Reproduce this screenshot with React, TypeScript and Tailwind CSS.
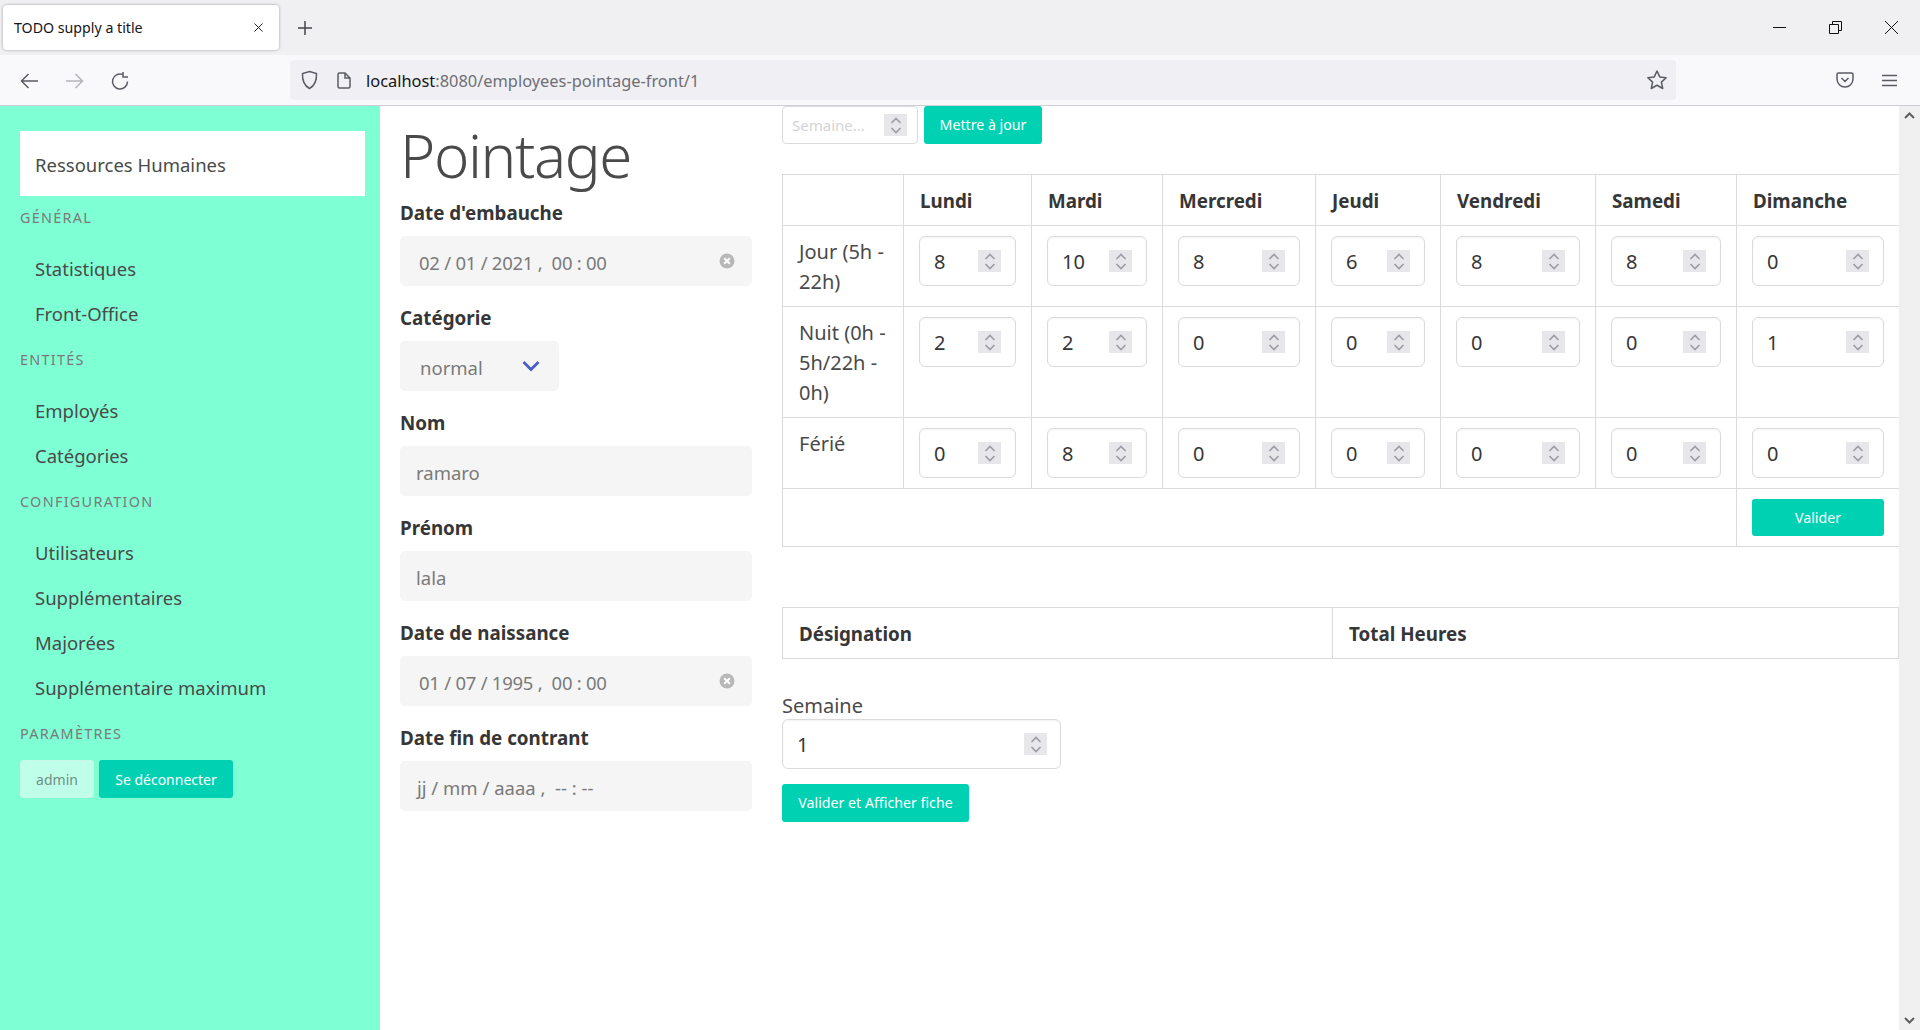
import { X } from "lucide-react"

const menu = [
  { title: "Général", items: ["Statistiques", "Front-Office"] },
  { title: "Entités", items: ["Employés", "Catégories"] },
  { title: "Configuration", items: ["Utilisateurs", "Supplémentaires", "Majorées", "Supplémentaire maximum"] },
]

const days = ["Lundi", "Mardi", "Mercredi", "Jeudi", "Vendredi", "Samedi", "Dimanche"]

const rows = [
  { label: "Jour (5h - 22h)", values: [8, 10, 8, 6, 8, 8, 0] },
  { label: "Nuit (0h - 5h/22h - 0h)", values: [2, 2, 0, 0, 0, 0, 1] },
  { label: "Férié", values: [0, 8, 0, 0, 0, 0, 0] },
]

const colWidths = ["w-[121px]", "w-[128px]", "w-[131px]", "w-[153px]", "w-[125px]", "w-[155px]", "w-[141px]", "w-[163px]"]

function Spinner() {
  return (
    <span className="flex h-[22px] w-[23px] shrink-0 items-center justify-center bg-[#e6e6eb]">
      <svg width="12" height="17" viewBox="0 0 12 17" fill="none" stroke="#9c9ca6" strokeWidth="1.6">
        <path d="M1.500 6 6 1.500 10.500 6" />
        <path d="M1.500 11 6 15.500 10.500 11" />
      </svg>
    </span>
  )
}

function NumberField({ value }: { value: number }) {
  return (
    <div className="flex h-[50px] items-center rounded-[6px] border border-[#dbdbdb] pl-[14px] pr-[14px] shadow-[inset_0_1px_2px_rgba(10,10,10,0.05)]">
      <input readOnly value={value} className="w-full min-w-0 bg-transparent pt-px text-[20px] text-[#363636] outline-none" />
      <Spinner />
    </div>
  )
}

function ClearIcon() {
  return (
    <svg width="16" height="16" viewBox="0 0 16 16" className="shrink-0">
      <circle cx="8" cy="8" r="7.5" fill="#b8b8b8" />
      <path d="M5.200 5.200 10.800 10.800M10.800 5.200 5.200 10.800" stroke="#fff" strokeWidth="2" />
    </svg>
  )
}

function Field({ label, value, clear, inset = "pl-4" }: { label: string; value: string; clear?: boolean; inset?: string }) {
  return (
    <div className="mb-[17px]">
      <div className="mb-2 text-[18.800px] font-bold leading-[30px] text-[#363636]">{label}</div>
      <div className={`flex h-[50px] items-center rounded-[5px] bg-[#f5f5f5] pr-[17px] text-[18.500px] text-[#7a7a7a] ${inset}`}>
        <span className="flex-1 whitespace-pre pt-[3px]">{value}</span>
        {clear && <ClearIcon />}
      </div>
    </div>
  )
}

function BrowserChrome() {
  return (
    <div className="h-[106px] border-b border-[#cfcfd3] bg-[#f9f9fb]">
      <div className="flex h-[55px] items-center bg-[#f0f0f2] pl-[3px]">
        <div className="flex h-[45px] w-[276px] items-center justify-between rounded-[4px] bg-white pl-[11px] pr-[13px] text-[14.200px] text-[#15141a] shadow-[0_0_3px_rgba(0,0,0,0.35)]">
          <span>TODO supply a title</span>
          <X size={15} strokeWidth={1.5} />
        </div>
        <svg width="16" height="16" viewBox="0 0 16 16" className="ml-[18px]" stroke="#44434a" strokeWidth="1.5">
          <path d="M8 1v14M1 8h14" />
        </svg>
        <div className="ml-auto flex items-center gap-[43px] pr-[22px]">
          <svg width="13" height="13" viewBox="0 0 13 13" stroke="#111" strokeWidth="1"><path d="M0 6.500h13" /></svg>
          <svg width="13" height="13" viewBox="0 0 13 13" fill="none" stroke="#111" strokeWidth="1"><path d="M.5 3.500h9v9h-9zM3.500 3.500v-3h9v9h-3" /></svg>
          <svg width="13" height="13" viewBox="0 0 13 13" stroke="#111" strokeWidth="1"><path d="M0 0 13 13M13 0 0 13" /></svg>
        </div>
      </div>
      <div className="flex h-[50px] items-center">
        <div className="flex w-[290px] items-center gap-[26px] pl-[20px] pt-[2px]">
          <svg width="19" height="18" viewBox="0 0 19 18" fill="none" stroke="#5b5b66" strokeWidth="1.5"><path d="M18 9H1.500M8.500 2l-7 7 7 7" /></svg>
          <svg width="19" height="18" viewBox="0 0 19 18" fill="none" stroke="#b4b4ba" strokeWidth="1.5"><path d="M1 9h16.500M10.500 2l7 7-7 7" /></svg>
          <svg width="20" height="20" viewBox="0 0 20 20" fill="none" stroke="#5b5b66" strokeWidth="1.5"><path d="M17.500 10.500A7.500 7.500 0 1 1 12.500 3.400M13 1v5h5" /></svg>
        </div>
        <div className="flex h-10 w-[1386px] items-center rounded-[4px] bg-[#f0f0f4] pl-[11px] pr-[8px]">
          <svg width="17" height="20" viewBox="0 0 17 20" fill="none" stroke="#5b5b66" strokeWidth="1.5"><path d="M8.500 1.500 15.500 3.500C15.800 10 14 15.500 8.500 18.500 3 15.500 1.200 10 1.500 3.500Z" /></svg>
          <svg width="14" height="17" viewBox="0 0 14 17" fill="none" stroke="#5b5b66" strokeWidth="1.5" className="ml-[19px]"><path d="M1 2.500A1.500 1.500 0 0 1 2.500 1H8l5 5v8.500A1.500 1.500 0 0 1 11.500 16h-9A1.500 1.500 0 0 1 1 14.500ZM8 1v5h5" /></svg>
          <span className="ml-[15px] pt-[2px] text-[16.400px] text-[#15141a]">localhost<span className="text-[#6f6e75]">:8080/employees-pointage-front/1</span></span>
          <svg width="22" height="22" viewBox="0 0 20 20" fill="none" stroke="#5b5b66" strokeWidth="1.4" className="ml-auto"><path d="m10 1.800 2.500 5.400 5.800.7-4.300 4 1.200 5.800-5.200-2.900-5.200 2.900 1.200-5.800-4.300-4 5.800-.7Z" strokeLinejoin="round" /></svg>
        </div>
        <svg width="18" height="16" viewBox="0 0 18 16" fill="none" stroke="#5b5b66" strokeWidth="1.5" className="ml-[160px]"><path d="M2.500 1h13A1.500 1.500 0 0 1 17 2.500V7A8 8 0 0 1 1 7V2.500A1.500 1.500 0 0 1 2.500 1ZM5.500 6 9 9.500 12.500 6" /></svg>
        <svg width="15" height="13" viewBox="0 0 15 13" stroke="#5b5b66" strokeWidth="1.500" className="ml-[28px]"><path d="M0 1.500h15M0 6.500h15M0 11.500h15" /></svg>
      </div>
    </div>
  )
}

function Sidebar() {
  return (
    <aside className="w-[380px] shrink-0 bg-[#7fffd4] pl-5 pr-[15px] pt-[25px]">
      <div className="flex h-[65px] items-center bg-white pl-[15px] pt-[2px] text-[18.500px] text-[#4a4a4a]">Ressources Humaines</div>
      {menu.map((group) => (
        <div key={group.title}>
          <p className="mt-[12px] text-[14.400px] uppercase leading-[20px] tracking-[1.300px] text-[#7a7a7a]">{group.title}</p>
          <ul className="mb-[14px] mt-[18px]">
            {group.items.map((item) => (
              <li key={item} className="flex h-[45px] items-center pl-[15px] text-[18.500px] text-[#4a4a4a]">{item}</li>
            ))}
          </ul>
        </div>
      ))}
      <p className="mt-[14px] text-[14.400px] uppercase leading-[20px] tracking-[1.300px] text-[#7a7a7a]">Paramètres</p>
      <div className="mt-[16px] flex gap-[5px]">
        <button className="h-[38px] w-[74px] rounded-[3px] border border-[#c9f7e7] bg-[#bfffe9] text-[14px] text-[#6f8f85]">admin</button>
        <button className="h-[38px] w-[134px] rounded-[3px] bg-[#00d1b2] text-[14px] text-white">Se déconnecter</button>
      </div>
    </aside>
  )
}

export default function App() {
  return (
    <div className="flex h-[1030px] w-[1920px] flex-col overflow-hidden bg-white font-['Noto_Sans',sans-serif] text-[#4a4a4a]">
      <BrowserChrome />
      <div className="flex flex-1">
        <Sidebar />

        <section className="ml-5 w-[352px] shrink-0">
          <h1 className="mb-[9px] mt-[15px] text-[60px] font-light leading-[68px] tracking-[-1.400px] text-[#4a4a4a]">Pointage</h1>
          <Field label="Date d'embauche" value="02 / 01 / 2021 ,  00 : 00" clear inset="pl-[19px] tracking-[-0.250px]" />
          <div className="mb-[17px]">
            <div className="mb-2 text-[18.800px] font-bold leading-[30px] text-[#363636]">Catégorie</div>
            <div className="flex h-[50px] w-[159px] items-center justify-between rounded-[5px] bg-[#f5f5f5] pl-5 pr-[19px] text-[18.500px] text-[#7a7a7a]">
              <span className="pt-[3px]">normal</span>
              <svg width="18" height="12" viewBox="0 0 18 12" fill="none" stroke="#485fc7" strokeWidth="2.800"><path d="M1.500 2 9 9.500 16.500 2" /></svg>
            </div>
          </div>
          <Field label="Nom" value="ramaro" />
          <Field label="Prénom" value="lala" />
          <Field label="Date de naissance" value="01 / 07 / 1995 ,  00 : 00" clear inset="pl-[19px] tracking-[-0.250px]" />
          <Field label="Date fin de contrant" value="jj / mm / aaaa ,  -- : --" inset="pl-[17px]" />
        </section>

        <section className="ml-[30px] w-[1117px] shrink-0">
          <div className="flex gap-[6px]">
            <div className="flex h-[38px] w-[136px] items-center rounded-[4px] border border-[#dbdbdb] pl-[9px] pr-[10px]">
              <input readOnly placeholder="Semaine..." className="w-full min-w-0 bg-transparent text-[15px] outline-none placeholder:text-[#d4d4d4]" />
              <Spinner />
            </div>
            <button className="h-[38px] w-[118px] rounded-[3px] bg-[#00d1b2] text-[14.200px] text-white">Mettre à jour</button>
          </div>

          <table className="mt-[30px] w-[1117px] table-fixed border-collapse text-[20px]">
            <colgroup>
              {colWidths.map((w) => <col key={w} className={w} />)}
            </colgroup>
            <thead>
              <tr>
                <th className="border border-[#dbdbdb]"></th>
                {days.map((day) => (
                  <th key={day} className="border border-[#dbdbdb] px-4 pb-[9px] pt-[11px] text-left text-[18.800px] font-bold leading-[30px] text-[#363636]">{day}</th>
                ))}
              </tr>
            </thead>
            <tbody>
              {rows.map((row) => (
                <tr key={row.label}>
                  <td className="border border-[#dbdbdb] px-4 pb-[9px] pt-[11px] align-top leading-[30px]">{row.label}</td>
                  {row.values.map((v, i) => (
                    <td key={i} className="border border-[#dbdbdb] px-[15px] py-2.5 align-top"><NumberField value={v} /></td>
                  ))}
                </tr>
              ))}
              <tr>
                <td colSpan={7} className="border border-[#dbdbdb]"></td>
                <td className="border border-[#dbdbdb] px-[15px] py-2.5">
                  <button className="block h-[37px] w-full rounded-[3px] bg-[#00d1b2] text-[14.200px] text-white">Valider</button>
                </td>
              </tr>
            </tbody>
          </table>

          <table className="mt-[60px] w-[1117px] table-fixed border-collapse">
            <thead>
              <tr>
                <th className="w-[550px] border border-[#dbdbdb] px-4 pb-[9px] pt-[11px] text-left text-[18.800px] font-bold leading-[30px] text-[#363636]">Désignation</th>
                <th className="border border-[#dbdbdb] px-4 pb-[9px] pt-[11px] text-left text-[18.800px] font-bold leading-[30px] text-[#363636]">Total Heures</th>
              </tr>
            </thead>
          </table>

          <div className="mt-[32px] pt-px text-[20px] leading-[27px]">Semaine</div>
          <div className="flex h-[50px] w-[279px] items-center rounded-[6px] border border-[#dbdbdb] pl-[14px] pr-[13px] shadow-[inset_0_1px_2px_rgba(10,10,10,0.05)]">
            <input readOnly value="1" className="w-full min-w-0 bg-transparent pt-px text-[20px] text-[#363636] outline-none" />
            <Spinner />
          </div>
          <button className="mt-[15px] block h-[38px] w-[187px] rounded-[3px] bg-[#00d1b2] text-[14.200px] text-white">Valider et Afficher fiche</button>
        </section>

        <div className="ml-auto flex w-[21px] flex-col items-center justify-between bg-[#f0f0f0] py-[6px]">
          <svg width="11" height="7" viewBox="0 0 11 7" fill="none" stroke="#5f5f5f" strokeWidth="2"><path d="M1 6 5.500 1.500 10 6" /></svg>
          <svg width="11" height="7" viewBox="0 0 11 7" fill="none" stroke="#5f5f5f" strokeWidth="2"><path d="M1 1 5.500 5.500 10 1" /></svg>
        </div>
      </div>
    </div>
  )
}
